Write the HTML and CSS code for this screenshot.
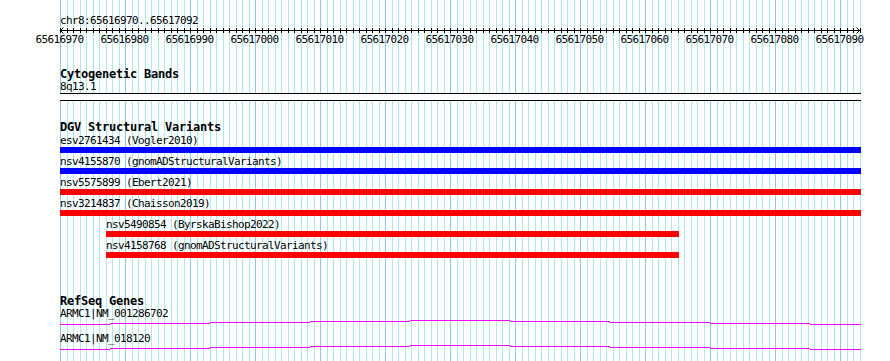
FILE: index.html
```html
<!DOCTYPE html>
<html lang="en">
<head>
  <meta charset="utf-8">
  <title>chr8:65616970..65617092</title>
  <link rel="stylesheet" href="styles.css">
</head>
<body>
  <div class="view">
    <!-- base pair grid, drawn behind the tracks -->
    <div class="grid"></div>

    <div class="ruler">
      <div class="loc">chr8:65616970..65617092</div>
      <div class="scale">
        <svg width="801" height="7" viewBox="0 0 801 7">
          <path d="M0 3.5H800M3.5 0.5L0.5 3.5L3.5 6.5M796.5 0.5L799.5 3.5L796.5 6.5" fill="none" stroke="#000" stroke-width="1"/>
        </svg>
      </div>
      <div class="labels">
        <span>65616970</span>
        <span>65616980</span>
        <span>65616990</span>
        <span>65617000</span>
        <span>65617010</span>
        <span>65617020</span>
        <span>65617030</span>
        <span>65617040</span>
        <span>65617050</span>
        <span>65617060</span>
        <span>65617070</span>
        <span>65617080</span>
        <span>65617090</span>
      </div>
    </div>

    <div class="track cyto">
      <div class="track-title">Cytogenetic Bands</div>
      <div class="label">8q13.1</div>
      <div class="band"></div>
    </div>

    <div class="track dgv">
      <div class="track-title">DGV Structural Variants</div>
      <div class="feature">
        <div class="label">esv2761434 (Vogler2010)</div>
        <div class="bar gain"></div>
      </div>
      <div class="feature">
        <div class="label">nsv4155870 (gnomADStructuralVariants)</div>
        <div class="bar gain"></div>
      </div>
      <div class="feature">
        <div class="label">nsv5575899 (Ebert2021)</div>
        <div class="bar loss"></div>
      </div>
      <div class="feature">
        <div class="label">nsv3214837 (Chaisson2019)</div>
        <div class="bar loss"></div>
      </div>
      <div class="feature sub">
        <div class="label">nsv5490854 (ByrskaBishop2022)</div>
        <div class="bar loss"></div>
      </div>
      <div class="feature sub">
        <div class="label">nsv4158768 (gnomADStructuralVariants)</div>
        <div class="bar loss"></div>
      </div>
    </div>

    <div class="track genes">
      <div class="track-title">RefSeq Genes</div>
      <div class="gene">
        <div class="label">ARMC1|NM_001286702</div>
        <svg width="801" height="5" viewBox="0 0 801 5" shape-rendering="crispEdges">
          <g fill="#ff00ff">
            <rect x="0" y="4" width="50" height="1"/>
            <rect x="50" y="3" width="100" height="1"/>
            <rect x="150" y="2" width="100" height="1"/>
            <rect x="250" y="1" width="100" height="1"/>
            <rect x="350" y="0" width="100" height="1"/>
            <rect x="450" y="1" width="100" height="1"/>
            <rect x="550" y="2" width="100" height="1"/>
            <rect x="650" y="3" width="100" height="1"/>
            <rect x="750" y="4" width="51" height="1"/>
          </g>
        </svg>
      </div>
      <div class="gene">
        <div class="label">ARMC1|NM_018120</div>
        <svg width="801" height="5" viewBox="0 0 801 5" shape-rendering="crispEdges">
          <g fill="#ff00ff">
            <rect x="0" y="4" width="50" height="1"/>
            <rect x="50" y="3" width="100" height="1"/>
            <rect x="150" y="2" width="100" height="1"/>
            <rect x="250" y="1" width="100" height="1"/>
            <rect x="350" y="0" width="100" height="1"/>
            <rect x="450" y="1" width="100" height="1"/>
            <rect x="550" y="2" width="100" height="1"/>
            <rect x="650" y="3" width="100" height="1"/>
            <rect x="750" y="4" width="51" height="1"/>
          </g>
        </svg>
      </div>
    </div>
  </div>
</body>
</html>
```

FILE: styles.css
```css
body {
  margin: 0;
  background-color: #fff;
  color: #000;
  font-family: "DejaVu Sans Mono", "Liberation Mono", monospace;
  font-size: 11px;
  letter-spacing: -0.62px;
  line-height: 12px;
}

.view {
  position: relative;
  width: 890px;
  height: 361px;
  padding: 15px 0 0 60px;
  box-sizing: border-box;
  overflow: hidden;
}

/* one line per base (6.5px), a darker one every 10 bases */
.grid {
  position: absolute;
  top: 0;
  left: 60px;
  width: 801px;
  height: 100%;
  background-image:
    repeating-linear-gradient(90deg, #88c8ec 0 1px, transparent 1px 65px),
    repeating-linear-gradient(90deg, #aaeaee 0 1px, transparent 1px 7px, #aaeaee 7px 8px, transparent 8px 13px);
}

.ruler, .track {
  position: relative;
}

.scale {
  width: 801px;
  height: 7px;
  background: repeating-linear-gradient(90deg, #000 0 1px, transparent 1px 7px, #000 7px 8px, transparent 8px 13px) 0 1px / 801px 5px no-repeat;
}
.scale svg { display: block; }

.labels {
  display: flex;
  margin-left: -33px;
}
.labels span {
  flex: none;
  width: 65px;
  text-align: center;
}

.track-title {
  font-weight: bold;
  font-size: 12px;
  letter-spacing: -0.22px;
  line-height: 13px;
}

.cyto { margin-top: 22px; }
.dgv { margin-top: 20px; }
.genes { margin-top: 37px; }

.band {
  width: 801px;
  height: 6px;
  background-color: #fff;
  border-top: 1px solid #000;
  border-bottom: 1px solid #000;
}

.dgv .track-title { margin-bottom: 1px; }

.feature { margin-bottom: 3px; }
.feature.sub { margin-left: 46px; }

.bar {
  width: 801px;
  height: 6px;
}
.feature.sub .bar { width: 573px; }
.bar.gain { background-color: #0000ff; }
.bar.loss { background-color: #ff0000; }

.gene { margin-bottom: 8px; }
.gene svg { display: block; }
```
